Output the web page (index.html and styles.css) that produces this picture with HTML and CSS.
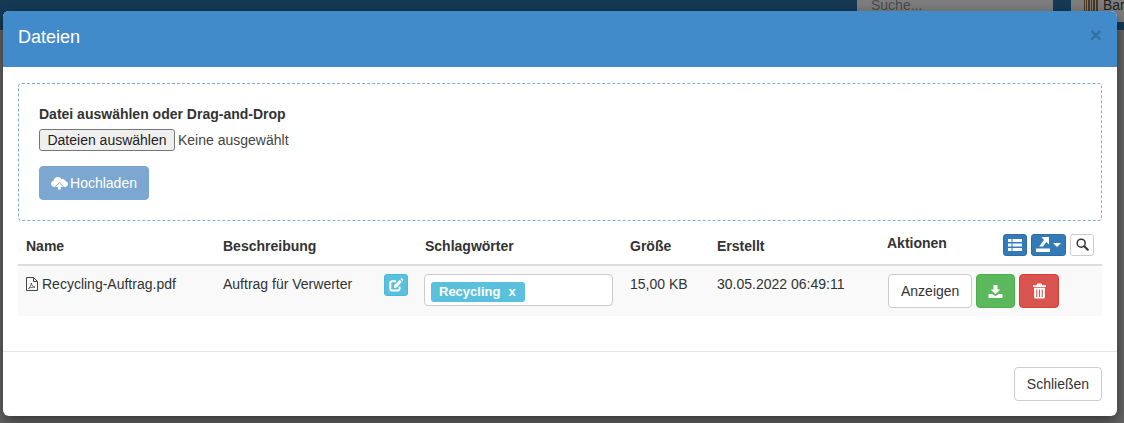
FILE: index.html
```html
<!DOCTYPE html>
<html lang="de">
<head>
<meta charset="utf-8">
<title>Dateien</title>
<link rel="stylesheet" href="styles.css">
</head>
<body>
<div class="backdrop">
  <div class="topbar">
    <div class="search-box">Suche...</div>
    <div class="barcode-btn">
      <svg class="barcode" viewBox="0 0 14 14"><path d="M0 0h1v14H0zM2 0h1v14H2zM4 0h2v14H4zM7 0h1v14H7zM9 0h2v14H9zM12 0h2v14h-2z"/></svg>
      <span>Barcode</span>
    </div>
  </div>
</div>

<div class="modal">
  <header class="modal-header">
    <h4>Dateien</h4>
    <span class="close">×</span>
  </header>

  <div class="modal-body">
    <section class="dropzone">
      <div class="drop-label">Datei auswählen oder Drag-and-Drop</div>
      <div class="file-row">
        <button class="file-btn" type="button">Dateien auswählen</button>
        <span>Keine ausgewählt</span>
      </div>
      <button class="btn btn-upload" type="button">
        <svg class="ico-cloud" viewBox="0 0 18 14"><path fill="#fff" d="M4 11.2H3.6C1.6 11.2 0 9.700 0 7.800c0-1.600 1.100-2.900 2.600-3.300C3 2.300 4.900.700 7.200.700c1.700 0 3.200.9 4 2.300.4-.2.800-.3 1.300-.3 1.500 0 2.700 1.100 2.800 2.500 1.500.3 2.700 1.400 2.700 2.900 0 1.700-1.500 3.100-3.300 3.100H14L9 6z"/><path fill="#fff" d="M9 6.900l4 4.300h-2.500V14h-3v-2.800H5z"/></svg>
        Hochladen
      </button>
    </section>

    <table class="files">
      <colgroup>
        <col class="c-name"><col class="c-desc"><col class="c-tags"><col class="c-size"><col class="c-date"><col class="c-act">
      </colgroup>
      <thead>
        <tr>
          <th>Name</th>
          <th>Beschreibung</th>
          <th>Schlagwörter</th>
          <th>Größe</th>
          <th>Erstellt</th>
          <th>
            <div class="act-head">
              <span class="act-title">Aktionen</span>
              <div class="tools">
                <button class="tool tool-blue" type="button">
                  <svg class="i-list" viewBox="0 0 14 12"><path fill="#fff" d="M0 0h3.500v3H0zM4.500 0H14v3H4.500zM0 4.500h3.500v3H0zM4.500 4.500H14v3H4.500zM0 9h3.500v3H0zM4.500 9H14v3H4.500z"/></svg>
                </button>
                <button class="tool tool-blue tool-export" type="button">
                  <svg class="i-export" viewBox="0 0 14 15"><path fill="#fff" d="M0 11.500h14V15H0zM5.500 0H13v7.500l-2.500-2.500L7 9.500H3.200L8 3z"/></svg>
                  <span class="caret"></span>
                </button>
                <button class="tool tool-white" type="button">
                  <svg class="i-search" viewBox="0 0 13 13"><circle cx="5.200" cy="5.200" r="4" fill="none" stroke="#333" stroke-width="1.500"/><path d="M8.300 8.300l3.500 3.500" stroke="#333" stroke-width="2" stroke-linecap="round"/></svg>
                </button>
              </div>
            </div>
          </th>
        </tr>
      </thead>
      <tbody>
        <tr>
          <td>
            <span class="name-cell">
              <svg class="ico-pdf" viewBox="0 0 12 14"><path fill="none" stroke="#444" d="M.5.500h7l4 4v9H.500zM7.500.500v4h4"/><path fill="none" stroke="#444" stroke-width=".8" d="M2.500 11.500c1.500-.8 2.500-3 2.800-5.500.4 2.200 1.500 3.800 3.700 4.200-2.200-.2-4.700.2-6.500 1.300z"/></svg>
              Recycling-Auftrag.pdf
            </span>
          </td>
          <td>
            <div class="desc-cell">
              <span>Auftrag für Verwerter</span>
              <button class="edit-btn" type="button">
                <svg class="i-edit" viewBox="0 0 14 14"><path fill="none" stroke="#fff" stroke-width="2" d="M10.500 8.500v2.300a1.700 1.700 0 0 1-1.700 1.700H3a1.700 1.700 0 0 1-1.700-1.700V5A1.700 1.700 0 0 1 3 3.300h4"/><path fill="#fff" d="M5 7.500L10.700 1.800l2.200 2.200L7.200 9.700H5zM11.500 1l1-1L14.700 2.200l-1 1z"/></svg>
              </button>
            </div>
          </td>
          <td>
            <div class="tag-input"><span class="tag">Recycling<span class="tag-x">x</span></span></div>
          </td>
          <td>15,00 KB</td>
          <td>30.05.2022 06:49:11</td>
          <td>
            <div class="actions">
              <button class="btn btn-default" type="button">Anzeigen</button>
              <button class="btn btn-green" type="button">
                <svg class="i-down" viewBox="0 0 14 13"><path fill="#fff" d="M5 0h4v4.500h2.800L7 9.200 2.200 4.500H5zM0 9h3.600L7 11l3.400-2H14v4H0z"/></svg>
              </button>
              <button class="btn btn-red" type="button">
                <svg class="i-trash" viewBox="0 0 12 14"><path fill="#fff" d="M4 0h4l.8 1.700H12v1.500H0V1.700h3.200zM1 4h10v8.500c0 .8-.6 1.500-1.400 1.500H2.400C1.600 14 1 13.300 1 12.500zm2 1.500v7h1v-7zm2.500 0v7h1v-7zm2.500 0v7h1v-7z"/></svg>
              </button>
            </div>
          </td>
        </tr>
      </tbody>
    </table>
  </div>

  <footer class="modal-footer">
    <button class="btn btn-default" type="button">Schließen</button>
  </footer>
</div>
</body>
</html>
```
FILE: styles.css
```css
* { box-sizing: border-box; }
html, body { margin: 0; padding: 0; height: 100%; overflow: hidden; }
body {
  background: #666;
  font-family: "Liberation Sans", Arial, sans-serif;
  font-size: 14px;
  line-height: 20px;
  color: #333;
}
.backdrop { height: 423px; }
.topbar {
  height: 30px;
  background: #163a57;
  display: flex;
  justify-content: flex-end;
  align-items: flex-start;
  gap: 18px;
}
.search-box {
  width: 196px;
  height: 12px;
  background: #7f7f7f;
  color: #4c4c4c;
  padding-left: 14px;
  line-height: 10px;
  overflow: hidden;
}
.barcode-btn {
  width: 53px;
  height: 22px;
  background: #7f7f7f;
  color: #222;
  display: flex;
  align-items: flex-start;
  gap: 5px;
  padding-left: 13px;
  line-height: 10px;
  overflow: hidden;
  white-space: nowrap;
}
.barcode { width: 14px; height: 14px; flex: none; fill: #4b3a1d; }

.modal {
  position: absolute;
  left: 3px;
  top: 11px;
  width: 1114px;
  height: 405px;
  background: #fff;
  border-radius: 6px;
  box-shadow: 0 5px 15px rgba(0, 0, 0, .5);
  overflow: hidden;
}
.modal-header {
  height: 56px;
  background: #428bca;
  padding: 0 15px;
  display: flex;
  align-items: flex-start;
  justify-content: space-between;
  color: #fff;
}
.modal-header h4 { margin: 16px 0 0; font-size: 18px; font-weight: 400; line-height: 20px; }
.close { color: #34709f; font-size: 21px; font-weight: 700; line-height: 1; margin-top: 13px; }

.modal-body { padding: 16px 15px 0; height: 284px; }
.dropzone {
  height: 138px;
  border: 1px dashed #7fb0d4;
  border-radius: 4px;
  padding: 20px;
}
.drop-label { font-weight: 700; margin-bottom: 5px; }
.file-row { display: flex; align-items: center; gap: 3px; height: 22px; margin-bottom: 15px; }
.file-btn {
  width: 136px;
  height: 22px;
  padding: 0;
  background: #efefef;
  border: 1px solid #767676;
  border-radius: 3px;
  font: 14px "Liberation Sans", Arial, sans-serif;
  color: #222;
}
.file-row span { color: #444; }

.btn {
  height: 34px;
  padding: 6px 12px;
  border: 1px solid #ccc;
  border-radius: 4px;
  font: 14px/20px "Liberation Sans", Arial, sans-serif;
  display: inline-flex;
  align-items: center;
  justify-content: center;
}
.btn-upload { width: 110px; background: #7ba7d0; border-color: #7ba7d0; color: #fff; gap: 2px; padding: 6px 0; }
.btn-default { background: #fff; color: #333; }
.btn-green { width: 39px; background: #5cb85c; border-color: #4cae4c; padding: 0; }
.btn-red { width: 40px; background: #d9534f; border-color: #d43f3a; padding: 0; }
.ico-cloud { width: 17px; height: 14px; }
.i-list { width: 14px; height: 12px; display: block; }
.i-export { width: 14px; height: 15px; display: block; }
.i-search { width: 13px; height: 13px; display: block; }
.i-edit { width: 14px; height: 14px; display: block; }
.i-down { width: 15px; height: 13px; display: block; }
.i-trash { width: 13px; height: 16px; display: block; }

.files { width: 1084px; table-layout: fixed; border-collapse: collapse; margin-top: 6px; }
.c-name { width: 197px; }
.c-desc { width: 202px; }
.c-tags { width: 205px; }
.c-size { width: 87px; }
.c-date { width: 170px; }
.c-act { width: 223px; }
.files th {
  height: 38px;
  padding: 8px;
  text-align: left;
  vertical-align: middle;
  font-weight: 700;
  border-bottom: 2px solid #ddd;
}
.files td {
  height: 50px;
  padding: 8px;
  vertical-align: top;
  background: #f9f9f9;
}
.act-head { display: flex; justify-content: space-between; align-items: center; margin-top: -2px; }
.act-title { margin-top: -3px; }
.tools { display: flex; gap: 4px; }
.tool {
  height: 22px;
  width: 24px;
  padding: 0;
  border-radius: 3px;
  border: 1px solid #2e6da4;
  display: flex;
  align-items: center;
  justify-content: center;
}
.tool-blue { background: #337ab7; }
.tool-export { width: 35px; gap: 3px; }
.tool-white { background: #fff; border-color: #ccc; }
.caret { width: 0; height: 0; border: 4px solid transparent; border-top-color: #fff; border-bottom: 0; }

.name-cell { display: flex; align-items: center; gap: 4px; }
.ico-pdf { width: 12px; height: 14px; flex: none; }
.desc-cell { display: flex; justify-content: space-between; align-items: flex-start; margin-right: 1px; }
.edit-btn {
  width: 24px;
  height: 22px;
  padding: 0;
  background: #5bc0de;
  border: 1px solid #46b8da;
  border-radius: 3px;
  display: flex;
  align-items: center;
  justify-content: center;
}
.tag-input {
  display: flex;
  align-items: flex-start;
  width: 189px;
  height: 32px;
  margin-left: -1px;
  padding: 7px 6px;
  background: #fff;
  border: 1px solid #ccc;
  border-radius: 4px;
}
.tag {
  display: inline-flex;
  align-items: center;
  width: 94px;
  height: 20px;
  padding-left: 8px;
  background: #5bc0de;
  border-radius: 3px;
  color: #fff;
  font-size: 13px;
  font-weight: 700;
  line-height: 20px;
}
.tag-x { margin-left: 8px; }
.actions { display: flex; gap: 4px; margin-left: 1px; }

.modal-footer {
  height: 65px;
  border-top: 1px solid #e5e5e5;
  padding: 15px;
  display: flex;
  justify-content: flex-end;
}
.modal-footer .btn { width: 88px; padding: 6px 0; }
```
